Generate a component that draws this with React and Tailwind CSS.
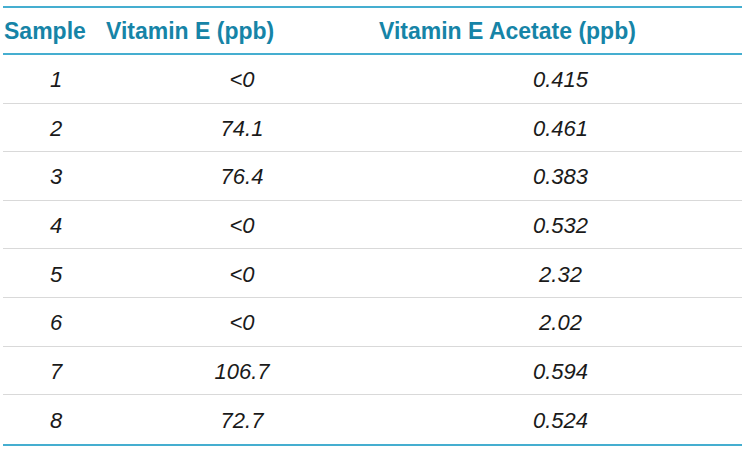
import React from "react";

const rows = [
  ["1", "<0", "0.415"],
  ["2", "74.1", "0.461"],
  ["3", "76.4", "0.383"],
  ["4", "<0", "0.532"],
  ["5", "<0", "2.32"],
  ["6", "<0", "2.02"],
  ["7", "106.7", "0.594"],
  ["8", "72.7", "0.524"],
];

export default function App() {
  return (
    <div className="w-[750px] h-[458px] bg-white pt-[6px] pl-[3px]" style={{ fontFamily: '"Liberation Sans", Arial, sans-serif' }}>
      <div className="w-[739px] border-t-2 border-b-2 border-[#45aed0]">
        <div className="grid grid-cols-[103px_273px_1fr] h-[47px] items-center border-b-2 border-[#45aed0] text-[23px] font-bold text-[#1684a7] leading-none pt-[1px]">
          <div className="pl-[1px]">Sample</div>
          <div>Vitamin E (ppb)</div>
          <div>Vitamin E Acetate (ppb)</div>
        </div>
        {rows.map((r, i) => (
          <div
            key={i}
            className={`grid grid-cols-[106px_266px_1fr] h-[48.6px] items-center text-[22px] italic text-[#1a1a1a] leading-none pt-[3px] ${i < rows.length - 1 ? "border-b border-[#d9d9d9]" : ""}`}
          >
            <div className="text-center">{r[0]}</div>
            <div className="text-center">{r[1]}</div>
            <div className="text-center pl-[4px]">{r[2]}</div>
          </div>
        ))}
      </div>
    </div>
  );
}
